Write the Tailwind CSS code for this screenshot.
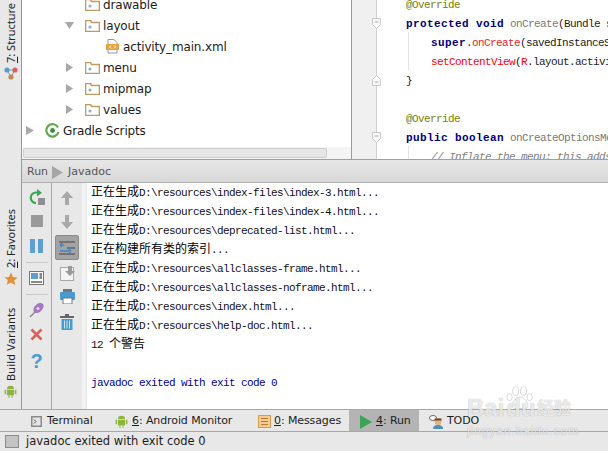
<!DOCTYPE html>
<html lang="zh">
<head>
    <meta charset="UTF-8">
    <title>Javadoc</title>
    <script src="https://cdn.jsdelivr.net/npm/@tailwindcss/browser@4"></script>
</head>
<body class="w-[608px] h-[451px] overflow-hidden bg-[#e8e8e8] font-['DejaVu_Sans','Noto_Sans_CJK_SC',sans-serif] text-[12px] text-[#1c1c1c]">

<div class="relative flex flex-col h-[451px]">
    <!-- main area -->
    <div class="flex h-[409px]">
        <!-- left rail -->
        <div class="flex flex-col items-center w-[21px] shrink-0 bg-[#e8e8e8] font-['Noto_Sans',sans-serif] text-[11px]">
            <span class="[writing-mode:vertical-rl] rotate-180 h-[63px] leading-[21px] text-[#222] whitespace-nowrap"><u>7</u>: Structure</span>
            <svg class="mt-[4px]" width="14" height="13" viewBox="0 0 14 13"><path d="M3 3h8M3 3l4 7M11 3l-4 7" stroke="#999" fill="none"/><circle cx="3" cy="3" r="2.6" fill="#5a9bd5"/><circle cx="11" cy="3" r="2.6" fill="#d9625e"/><circle cx="7" cy="10" r="2.6" fill="#c08a4a"/></svg>
            <span class="[writing-mode:vertical-rl] rotate-180 mt-[129px] h-[59px] leading-[21px] text-[#222] whitespace-nowrap"><u>2</u>: Favorites</span>
            <svg class="mt-[4px]" width="14" height="14" viewBox="0 0 14 14"><path d="M7 0.5l2 4.4 4.7.5-3.5 3.2 1 4.7L7 10.4l-4.2 2.4 1-4.7L.3 5.4 5 4.9z" fill="#e0913a"/></svg>
            <span class="[writing-mode:vertical-rl] rotate-180 mt-[21px] h-[74px] leading-[21px] tracking-[0.15px] text-[#222] whitespace-nowrap">Build Variants</span>
            <svg class="mt-[4px]" width="13" height="13" viewBox="0 0 13 13"><path d="M3 4a3.5 3.2 0 0 1 7 0zM3 4.7h7v5.5H8.5V13h-1v-2.8h-2V13h-1v-2.8H3zM.6 4.7h1.5v4.6H.6zM10.9 4.7h1.5v4.6h-1.5z" fill="#8db33f"/></svg>
        </div>

        <div class="flex flex-col flex-1 min-w-0 border-l border-[#9a9a9a]">
            <!-- top split: project tree and editor -->
            <div class="flex h-[160px] overflow-hidden border-b border-[#a0a0a0] shrink-0">
                <div class="relative w-[330px] shrink-0 bg-white overflow-hidden border-r border-[#9a9a9a]">
                    <div class="-mt-[6px] flex flex-col tracking-[-0.15px]">
                        <div class="flex items-center h-[21px] pl-[63px] gap-[3px]">
                            <svg width="15" height="12" viewBox="0 0 15 12"><path d="M.5 11.5V.5h5l1 2h8v9z" fill="#fff" stroke="#c19a62" stroke-width="1.6"/><circle cx="5" cy="7" r="1.6" fill="#7fb4d6"/></svg>
                            <span>drawable</span>
                        </div>
                        <div class="flex items-center h-[21px] pl-[43px]">
                            <svg width="9" height="7" viewBox="0 0 9 7"><path d="M0 0h9L4.5 7z" fill="#a8a8a8"/></svg>
                            <svg class="ml-[11px] mr-[3px]" width="15" height="12" viewBox="0 0 15 12"><path d="M.5 11.5V.5h5l1 2h8v9z" fill="#fff" stroke="#c19a62" stroke-width="1.6"/><circle cx="5" cy="7" r="1.6" fill="#7fb4d6"/></svg>
                            <span>layout</span>
                        </div>
                        <div class="flex items-center h-[21px] pl-[84px] gap-[4px]">
                            <svg width="13" height="15" viewBox="0 0 13 15"><path d="M2 .5h6l3 3V14H2z" fill="#fff" stroke="#999"/><rect x="0" y="5" width="13" height="6" fill="#e8a33d"/><path d="M5 6.5L3.5 8 5 9.5M8 6.5L9.5 8 8 9.5" stroke="#fff" fill="none"/></svg>
                            <span>activity_main.xml</span>
                        </div>
                        <div class="flex items-center h-[21px] pl-[44px]">
                            <svg width="7" height="9" viewBox="0 0 7 9"><path d="M0 0l7 4.5L0 9z" fill="#a8a8a8"/></svg>
                            <svg class="ml-[12px] mr-[3px]" width="15" height="12" viewBox="0 0 15 12"><path d="M.5 11.5V.5h5l1 2h8v9z" fill="#fff" stroke="#c19a62" stroke-width="1.6"/><circle cx="5" cy="7" r="1.6" fill="#7fb4d6"/></svg>
                            <span>menu</span>
                        </div>
                        <div class="flex items-center h-[21px] pl-[44px]">
                            <svg width="7" height="9" viewBox="0 0 7 9"><path d="M0 0l7 4.5L0 9z" fill="#a8a8a8"/></svg>
                            <svg class="ml-[12px] mr-[3px]" width="15" height="12" viewBox="0 0 15 12"><path d="M.5 11.5V.5h5l1 2h8v9z" fill="#fff" stroke="#c19a62" stroke-width="1.6"/><circle cx="5" cy="7" r="1.6" fill="#7fb4d6"/></svg>
                            <span>mipmap</span>
                        </div>
                        <div class="flex items-center h-[21px] pl-[44px]">
                            <svg width="7" height="9" viewBox="0 0 7 9"><path d="M0 0l7 4.5L0 9z" fill="#a8a8a8"/></svg>
                            <svg class="ml-[12px] mr-[3px]" width="15" height="12" viewBox="0 0 15 12"><path d="M.5 11.5V.5h5l1 2h8v9z" fill="#fff" stroke="#c19a62" stroke-width="1.6"/><circle cx="5" cy="7" r="1.6" fill="#7fb4d6"/></svg>
                            <span>values</span>
                        </div>
                        <div class="flex items-center h-[21px] pl-[4px]">
                            <svg width="8" height="9" viewBox="0 0 8 9"><path d="M0 0l8 4.5L0 9z" fill="#a8a8a8"/></svg>
                            <svg class="ml-[11px] mr-[3px]" width="15" height="15" viewBox="0 0 15 15"><path d="M13 4.5A6.2 6.2 0 1 0 13.5 9" fill="none" stroke="#5cab4c" stroke-width="2.2"/><circle cx="7.5" cy="7.5" r="2.4" fill="#3e8f3a"/></svg>
                            <span>Gradle Scripts</span>
                        </div>
                    </div>
                    <!-- horizontal scrollbar -->
                    <div class="absolute left-0 right-0 bottom-0 h-[12px] bg-[#f4f4f4]">
                        <div class="ml-[1px] w-[304px] h-[10px] mt-[1px] bg-[#e6e6e6] border border-[#cfcfcf] rounded-[2px]"></div>
                    </div>
                </div>

                <!-- gutter -->
                <div class="relative w-[25px] shrink-0 bg-[#f0f0f0] border-r border-[#d0d0d0]">
                    <svg class="absolute left-[20px] top-[18px] z-10" width="9" height="11" viewBox="0 0 9 11"><path d="M.5.5h8v6l-4 4-4-4z" fill="#fafafa" stroke="#c8c8c8"/><path d="M2.5 4h4" stroke="#aaa"/></svg>
                    <svg class="absolute left-[20px] top-[75px] z-10" width="9" height="11" viewBox="0 0 9 11"><path d="M.5 10.5h8v-6l-4-4-4 4z" fill="#fafafa" stroke="#c8c8c8"/><path d="M2.5 7h4" stroke="#aaa"/></svg>
                    <svg class="absolute left-[20px] top-[132px] z-10" width="9" height="11" viewBox="0 0 9 11"><path d="M.5.5h8v6l-4 4-4-4z" fill="#fafafa" stroke="#c8c8c8"/><path d="M2.5 4h4" stroke="#aaa"/></svg>
                </div>

                <!-- editor -->
                <div class="relative flex-1 min-w-0 bg-white pl-[29px] font-['Liberation_Mono','Noto_Sans_CJK_SC',monospace] text-[11px] leading-[19px] tracking-[-0.6px] whitespace-nowrap">
                    <div class="absolute left-[31px] top-[32px] w-px h-[38px] bg-[#e2e2e2]"></div>
                    <div class="absolute left-[31px] top-[146px] w-px h-[13px] bg-[#e2e2e2]"></div>
                    <div class="-mt-[4px]">
                        <div class="text-[#808000]">@Override</div>
                        <div><b class="text-[#000080] tracking-[0.4px]">protected void</b> <span class="text-[#7a7a7a]">onCreate</span>(Bundle savedInstanceState) {</div>
                        <div class="pl-[25px]"><b class="text-[#000080] tracking-[0.4px]">super</b>.<span class="text-[#e8232a]">onCreate</span>(savedInstanceState);</div>
                        <div class="pl-[25px]"><span class="text-[#ff0000]">setContentView</span>(<span class="text-[#ff0000]">R</span>.layout.activity_main);</div>
                        <div>}</div>
                        <div class="h-[19px]"></div>
                        <div class="text-[#808000]">@Override</div>
                        <div><b class="text-[#000080] tracking-[0.4px]">public boolean</b> <span class="text-[#7a7a7a]">onCreateOptionsMenu</span>(Menu menu) {</div>
                        <div class="pl-[25px] italic text-[#808080]">// Inflate the menu; this adds items</div>
                    </div>
                </div>
            </div>

            <!-- run panel header -->
            <div class="flex items-center h-[23px] shrink-0 pl-[5px] pt-[2px] bg-gradient-to-b from-[#e6e6e6] to-[#d8d8d8] border-b border-[#b0b0b0] text-[11px] text-[#555]">
                <span>Run</span>
                <svg class="ml-[4px] mr-[5px]" width="11" height="13" viewBox="0 0 11 13"><path d="M0 0l11 6.5L0 13z" fill="#a6a6a6"/></svg>
                <span>Javadoc</span>
            </div>

            <!-- run panel body -->
            <div class="flex flex-1 min-h-0">
                <div class="flex flex-col items-center w-[30px] shrink-0 border-r border-[#a8a8a8] pt-[6px]">
                    <svg width="16" height="17" viewBox="0 0 16 17"><path d="M9.5 3.5H7A5 5 0 0 0 7 14" fill="none" stroke="#3aa655" stroke-width="2.2"/><path d="M8 0l5 3.7L8 7.4z" fill="#3aa655"/><rect x="9" y="9" width="7" height="7" fill="#8f8f8f"/></svg>
                    <div class="mt-[9px] w-[12px] h-[12px] bg-[#9a9a9a]"></div>
                    <svg class="mt-[12px]" width="13" height="14" viewBox="0 0 13 14"><rect width="5" height="14" fill="#5d9fd4"/><rect x="8" width="5" height="14" fill="#5d9fd4"/></svg>
                    <div class="mt-[9px] w-[22px] h-px bg-[#c8c8c8]"></div>
                    <svg class="mt-[8px]" width="15" height="14" viewBox="0 0 15 14"><rect x=".5" y=".5" width="14" height="13" fill="#fff" stroke="#777"/><rect x="2" y="2" width="7" height="6" fill="#5d9fd4"/><rect x="10.5" y="2" width="2.5" height="6" fill="#888"/><rect x="2" y="10" width="11" height="2" fill="#888"/></svg>
                    <div class="mt-[9px] w-[22px] h-px bg-[#c8c8c8]"></div>
                    <svg class="mt-[7px]" width="16" height="16" viewBox="0 0 16 16"><path d="M1 15l5-5" stroke="#888" stroke-width="1.5"/><ellipse cx="9.5" cy="6" rx="4" ry="6" transform="rotate(45 9.5 6)" fill="#a678c4"/><circle cx="9" cy="6.5" r="1.5" fill="#e6d8f0"/></svg>
                    <svg class="mt-[10px]" width="13" height="13" viewBox="0 0 13 13"><path d="M1.5 1.5l10 10M11.5 1.5l-10 10" stroke="#dc5f5a" stroke-width="2.6"/></svg>
                    <span class="mt-[9px] font-['Liberation_Sans',sans-serif] font-bold text-[20px] leading-[22px] text-[#4a9bd0]">?</span>
                </div>
                <div class="flex flex-col items-center w-[30px] shrink-0 bg-[#e8e8e8] pt-[8px]">
                    <svg width="12" height="14" viewBox="0 0 12 14"><path d="M6 0l6 7H8v7H4V7H0z" fill="#a8a8a8"/></svg>
                    <svg class="mt-[10px]" width="12" height="14" viewBox="0 0 12 14"><path d="M6 14l6-7H8V0H4v7H0z" fill="#a8a8a8"/></svg>
                    <div class="flex items-center justify-center mt-[6px] w-[24px] h-[25px] rounded-[2px] bg-[#a3a3a3] border border-[#8a8a8a]">
                        <svg width="18" height="16" viewBox="0 0 18 16"><path d="M1 2h16M1 14h16M9 8h8" stroke="#444"/><path d="M6 5H2M13 8l-3 3h-8M2 5l2-2M2 5l2 2M13 11l-2-2M13 11l-2 2" stroke="#3d86c6" stroke-width="1.3" fill="none"/></svg>
                    </div>
                    <svg class="mt-[6px]" width="15" height="15" viewBox="0 0 15 15"><rect x=".5" y="1.5" width="13" height="13" fill="#f4f4f4" stroke="#a8a8a8"/><path d="M8 0h4v5h3l-5 5-5-5h3z" fill="#9a9a9a"/></svg>
                    <svg class="mt-[8px]" width="15" height="15" viewBox="0 0 15 15"><rect x="3" y="0" width="9" height="4" fill="#777"/><rect x="0" y="3" width="15" height="8" rx="1" fill="#4a9bd0"/><rect x="3" y="9" width="9" height="6" fill="#fff" stroke="#777"/></svg>
                    <svg class="mt-[10px]" width="14" height="16" viewBox="0 0 14 16"><rect x="0" y="2" width="14" height="2" fill="#666"/><rect x="5" y="0" width="4" height="2" fill="#666"/><rect x="1.5" y="5" width="11" height="11" fill="#4a9bd0"/><path d="M4.5 6.5v8M7 6.5v8M9.5 6.5v8" stroke="#cfe4f2"/></svg>
                </div>
                <div class="w-[4px] shrink-0 bg-[#f2f2f2]"></div>

                <!-- console -->
                <div class="flex-1 min-w-0 bg-white border-l border-[#e4e4e4] pl-[4px] font-['Liberation_Mono',monospace] text-[11px] leading-[19px] tracking-[-0.6px] whitespace-nowrap text-[#101018] overflow-hidden">
                    <div class="-mt-[2px]">
                        <div class="h-[19px]"><span class="font-['Noto_Sans_CJK_SC',sans-serif] text-[12px] tracking-normal text-black">正在生成</span>D:\resources\index-files\index-3.html...</div>
                        <div class="h-[19px]"><span class="font-['Noto_Sans_CJK_SC',sans-serif] text-[12px] tracking-normal text-black">正在生成</span>D:\resources\index-files\index-4.html...</div>
                        <div class="h-[19px]"><span class="font-['Noto_Sans_CJK_SC',sans-serif] text-[12px] tracking-normal text-black">正在生成</span>D:\resources\deprecated-list.html...</div>
                        <div class="h-[19px]"><span class="font-['Noto_Sans_CJK_SC',sans-serif] text-[12px] tracking-normal text-black">正在构建所有类的索引</span>...</div>
                        <div class="h-[19px]"><span class="font-['Noto_Sans_CJK_SC',sans-serif] text-[12px] tracking-normal text-black">正在生成</span>D:\resources\allclasses-frame.html...</div>
                        <div class="h-[19px]"><span class="font-['Noto_Sans_CJK_SC',sans-serif] text-[12px] tracking-normal text-black">正在生成</span>D:\resources\allclasses-noframe.html...</div>
                        <div class="h-[19px]"><span class="font-['Noto_Sans_CJK_SC',sans-serif] text-[12px] tracking-normal text-black">正在生成</span>D:\resources\index.html...</div>
                        <div class="h-[19px]"><span class="font-['Noto_Sans_CJK_SC',sans-serif] text-[12px] tracking-normal text-black">正在生成</span>D:\resources\help-doc.html...</div>
                        <div class="h-[19px]">12 <span class="font-['Noto_Sans_CJK_SC',sans-serif] text-[12px] tracking-normal text-black">个警告</span></div>
                        <div class="h-[22px]"></div>
                        <div class="text-[#0000a0]">javadoc exited with exit code 0</div>
                    </div>
                </div>
            </div>
        </div>
    </div>

    <!-- bottom tool tabs -->
    <div class="flex items-stretch h-[23px] shrink-0 border-t border-b border-[#a8a8a8] bg-[#e8e8e8] pl-[31px] text-[11px] tracking-[-0.1px]">
        <div class="flex items-center gap-[5px] w-[84px] pt-[2px]">
            <svg width="11" height="11" viewBox="0 0 11 11"><rect width="11" height="11" fill="#8a8a8a"/><rect x="1.5" y="1.5" width="8" height="8" fill="#e4e4e4"/><path d="M3 3.5L5 5.5 3 7.5" stroke="#555" fill="none"/></svg>
            <span>Terminal</span>
        </div>
        <div class="flex items-center gap-[4px] w-[143px] pt-[2px]">
            <svg width="13" height="13" viewBox="0 0 13 13"><path d="M3 4a3.5 3.2 0 0 1 7 0zM3 4.7h7v5.5H8.5V13h-1v-2.8h-2V13h-1v-2.8H3zM.6 4.7h1.5v4.6H.6zM10.9 4.7h1.5v4.6h-1.5z" fill="#8db33f"/></svg>
            <span><u>6</u>: Android Monitor</span>
        </div>
        <div class="flex items-center gap-[3px] w-[91px] pt-[2px]">
            <svg width="13" height="13" viewBox="0 0 13 13"><rect x=".5" y=".5" width="12" height="12" fill="#f3cc94" stroke="#d89a4e"/><path d="M3 3.5h7M3 6.5h7M3 9.5h7" stroke="#b87a30"/></svg>
            <span><u>0</u>: Messages</span>
        </div>
        <div class="flex items-center gap-[4px] w-[70px] pl-[11px] pt-[2px] bg-[#b4b4b4]">
            <svg width="12" height="14" viewBox="0 0 12 14"><path d="M0 0l12 7-12 7z" fill="#3aa655"/></svg>
            <span><u>4</u>: Run</span>
        </div>
        <div class="flex items-center gap-[2px] ml-[10px] pt-[2px]">
            <svg width="16" height="14" viewBox="0 0 16 14"><ellipse cx="4" cy="3" rx="3.5" ry="2.5" fill="#fff" stroke="#666"/><circle cx="9" cy="6.5" r="3.5" fill="#e8b27a"/><path d="M5.5 3.5h7v2h-7z" fill="#5b4a3a"/><path d="M4 14c0-3 2-4 5-4s5 1 5 4z" fill="#4a8ec2"/></svg>
            <span>TODO</span>
        </div>
    </div>

    <!-- status bar -->
    <div class="flex items-center gap-[7px] flex-1 pl-[5px] bg-[#e8e8e8] text-[11.5px]">
        <div class="w-[14px] h-[13px] bg-[#c4c4c4] border border-[#8c8c8c]"></div>
        <span>javadoc exited with exit code 0</span>
    </div>

    <!-- Baidu watermark -->
    <div class="absolute left-[466px] top-[382px] w-[112px] h-[60px] pointer-events-none font-['Liberation_Sans','Noto_Sans_CJK_SC',sans-serif] [text-shadow:0_0_1px_rgba(0,0,0,0.35)]">
        <svg class="absolute left-[40px] top-[3px]" width="28" height="26" viewBox="0 0 32 28"><g fill="#fff" fill-opacity=".6" stroke="#999" stroke-opacity=".4"><ellipse cx="11" cy="6" rx="3.5" ry="5"/><ellipse cx="20" cy="6" rx="3.5" ry="5"/><ellipse cx="4" cy="13" rx="3" ry="4"/><ellipse cx="27" cy="13" rx="3" ry="4"/><path d="M16 13c5 0 9 6 9 10 0 4-6 3-9 3s-9 1-9-3c0-4 4-10 9-10z"/></g></svg>
        <div class="absolute left-[1px] top-[13px] text-[24px] leading-[26px] font-bold text-white/75">Bai<span class="ml-[2px]">du</span></div>
        <div class="absolute left-[71px] top-[17px] text-[17px] leading-[20px] font-bold text-white/75">经验</div>
        <div class="absolute left-[1px] top-[41px] text-[12px] leading-[16px] tracking-[0.9px] text-white/75">jingyan.baidu.com</div>
    </div>
</div>

</body>
</html>
